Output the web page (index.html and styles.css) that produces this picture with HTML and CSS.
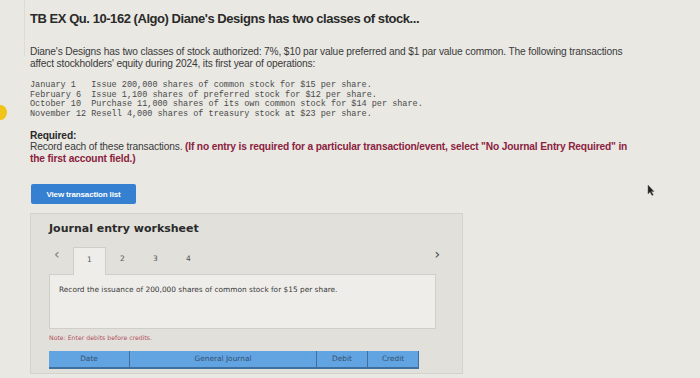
FILE: index.html
```html
<!DOCTYPE html>
<html lang="en">
<head>
  <meta charset="utf-8">
  <title>TB EX Qu. 10-162 (Algo)</title>
  <link rel="stylesheet" href="styles.css">
</head>
<body>
  <div class="rail"><span class="dot"></span></div>
  <div class="page">
    <h1 class="title">TB EX Qu. 10-162 (Algo) Diane's Designs has two classes of stock...</h1>
    <p class="intro">Diane's Designs has two classes of stock authorized: 7%, $10 par value preferred and $1 par value common. The following transactions affect stockholders' equity during 2024, its first year of operations:</p>
<pre class="events">January 1   Issue 200,000 shares of common stock for $15 per share.
February 6  Issue 1,100 shares of preferred stock for $12 per share.
October 10  Purchase 11,000 shares of its own common stock for $14 per share.
November 12 Resell 4,000 shares of treasury stock at $23 per share.</pre>
    <div class="required">
      <div class="req-label">Required:</div>
      <p>Record each of these transactions. <strong class="warn">(If no entry is required for a particular transaction/event, select "No Journal Entry Required" in the first account field.)</strong></p>
    </div>
    <button class="btn" type="button">View transaction list</button>

    <div class="worksheet">
      <h2 class="ws-title">Journal entry worksheet</h2>
      <div class="tabs">
        <span class="arrow">&lsaquo;</span>
        <span class="tab active">1</span>
        <span class="tab">2</span>
        <span class="tab">3</span>
        <span class="tab">4</span>
        <span class="arrow next">&rsaquo;</span>
      </div>
      <div class="panel">Record the issuance of 200,000 shares of common stock for $15 per share.</div>
      <div class="note">Note: Enter debits before credits.</div>
      <div class="grid-head">
        <div class="c-date">Date</div>
        <div class="c-gj">General Journal</div>
        <div class="c-debit">Debit</div>
        <div class="c-credit">Credit</div>
      </div>
    </div>
  </div>
  <svg class="cursor" width="8" height="12" viewBox="0 0 8 12"><path d="M1 1 L1 10 L3 8 L5 11.5 L6.3 10.8 L4.4 7.6 L7 7.4 Z" fill="#222" stroke="#666" stroke-width="0.5"/></svg>
</body>
</html>
```

FILE: styles.css
```css
:root {
  --page-bg: #e9e8e3;
  --box-bg: #e1e0db;
  --panel-bg: #eeede9;
  --text: #2e2e2e;
  --muted: #555;
  --warn: #8c2240;
  --blue: #3580d0;
  --head-blue: #62a4e2;
}
*, *::before, *::after {
  box-sizing: border-box;
  margin: 0;
  padding: 0;
}
html, body {
  width: 100%;
  height: 100%;
  overflow: hidden;
}
body {
  background: var(--page-bg);
  font-family: "Liberation Sans", Arial, sans-serif;
  color: var(--text);
  display: flex;
}
.rail {
  width: 25px;
  flex: none;
  border-right: 1px solid #dcdbd6;
  height: 56px;
  position: relative;
}
.dot {
  position: absolute;
  left: -6px;
  top: 105px;
  width: 13px;
  height: 15px;
  border-radius: 50%;
  background: #f0c419;
}
.page {
  padding: 11px 0 0 5px;
  flex: 1;
}
.title {
  font-size: 13px;
  line-height: 16px;
  font-weight: 700;
  letter-spacing: -0.45px;
  color: #2a2a2a;
}
.intro {
  margin-top: 19px;
  width: 615px;
  font-size: 10.2px;
  line-height: 11.5px;
  letter-spacing: -0.15px;
  color: #3a3a3a;
}
.events {
  margin-top: 12px;
  font-family: "Liberation Mono", "Courier New", monospace;
  font-size: 8.5px;
  line-height: 9.7px;
  color: #4a4a4a;
}
.required {
  margin-top: 10px;
  font-size: 10.2px;
  line-height: 11.5px;
  letter-spacing: -0.15px;
  width: 603px;
  color: #3a3a3a;
}
.req-label {
  font-weight: 700;
  color: #2a2a2a;
}
.warn {
  color: var(--warn);
}
.btn {
  margin-top: 20px;
  margin-left: 1px;
  width: 105px;
  height: 20px;
  border: none;
  border-radius: 2px;
  background: var(--blue);
  color: #fff;
  font-family: "Liberation Sans", Arial, sans-serif;
  font-size: 8px;
  font-weight: 700;
  letter-spacing: -0.15px;
  display: block;
}
/* worksheet */
.worksheet {
  margin-top: 9px;
  width: 433px;
  height: 161px;
  background: var(--box-bg);
  border: 1px solid #d3d2cd;
  padding: 8px 0 0 18px;
  font-family: "DejaVu Sans", Verdana, sans-serif;
}
.ws-title {
  font-size: 11px;
  line-height: 14px;
  font-weight: 700;
  color: #2b2b2b;
}
.tabs {
  margin-top: 11px;
  display: flex;
  align-items: flex-end;
  height: 27px;
  width: 394px;
}
.tab {
  width: 33px;
  height: 27px;
  padding-top: 7px;
  text-align: center;
  font-size: 7.5px;
  color: #555;
}
.tab.active {
  background: var(--panel-bg);
  border: 1px solid #cfcec9;
  border-bottom: none;
  position: relative;
  z-index: 1;
  margin-bottom: -1px;
  height: 28px;
}
.arrow {
  align-self: flex-start;
  font-size: 14px;
  line-height: 14px;
  width: 24px;
  padding-left: 5px;
  color: #777;
}
.arrow.next {
  margin-left: auto;
  width: auto;
  padding-right: 3px;
  color: #444;
}
.panel {
  width: 387px;
  height: 55px;
  background: var(--panel-bg);
  border: 1px solid #cfcec9;
  padding: 10px 0 0 9px;
  font-size: 7.4px;
  color: #3a3a3a;
}
.note {
  margin-top: 5px;
  font-size: 6.2px;
  color: #b4505e;
}
.grid-head {
  margin-top: 10px;
  width: 370px;
  height: 18px;
  display: grid;
  grid-template-columns: 80px 187px 51px 52px;
  background: var(--head-blue);
  border-bottom: 2px solid #3e6f9e;
  font-size: 7.4px;
  color: #34506e;
}
.grid-head div {
  text-align: center;
  line-height: 16px;
}
.grid-head div + div {
  border-left: 1px solid #3e6f9e;
}
.c-credit {
  border-right: 1px solid #3e6f9e;
}
.cursor {
  position: absolute;
  left: 647px;
  top: 184px;
}
```
